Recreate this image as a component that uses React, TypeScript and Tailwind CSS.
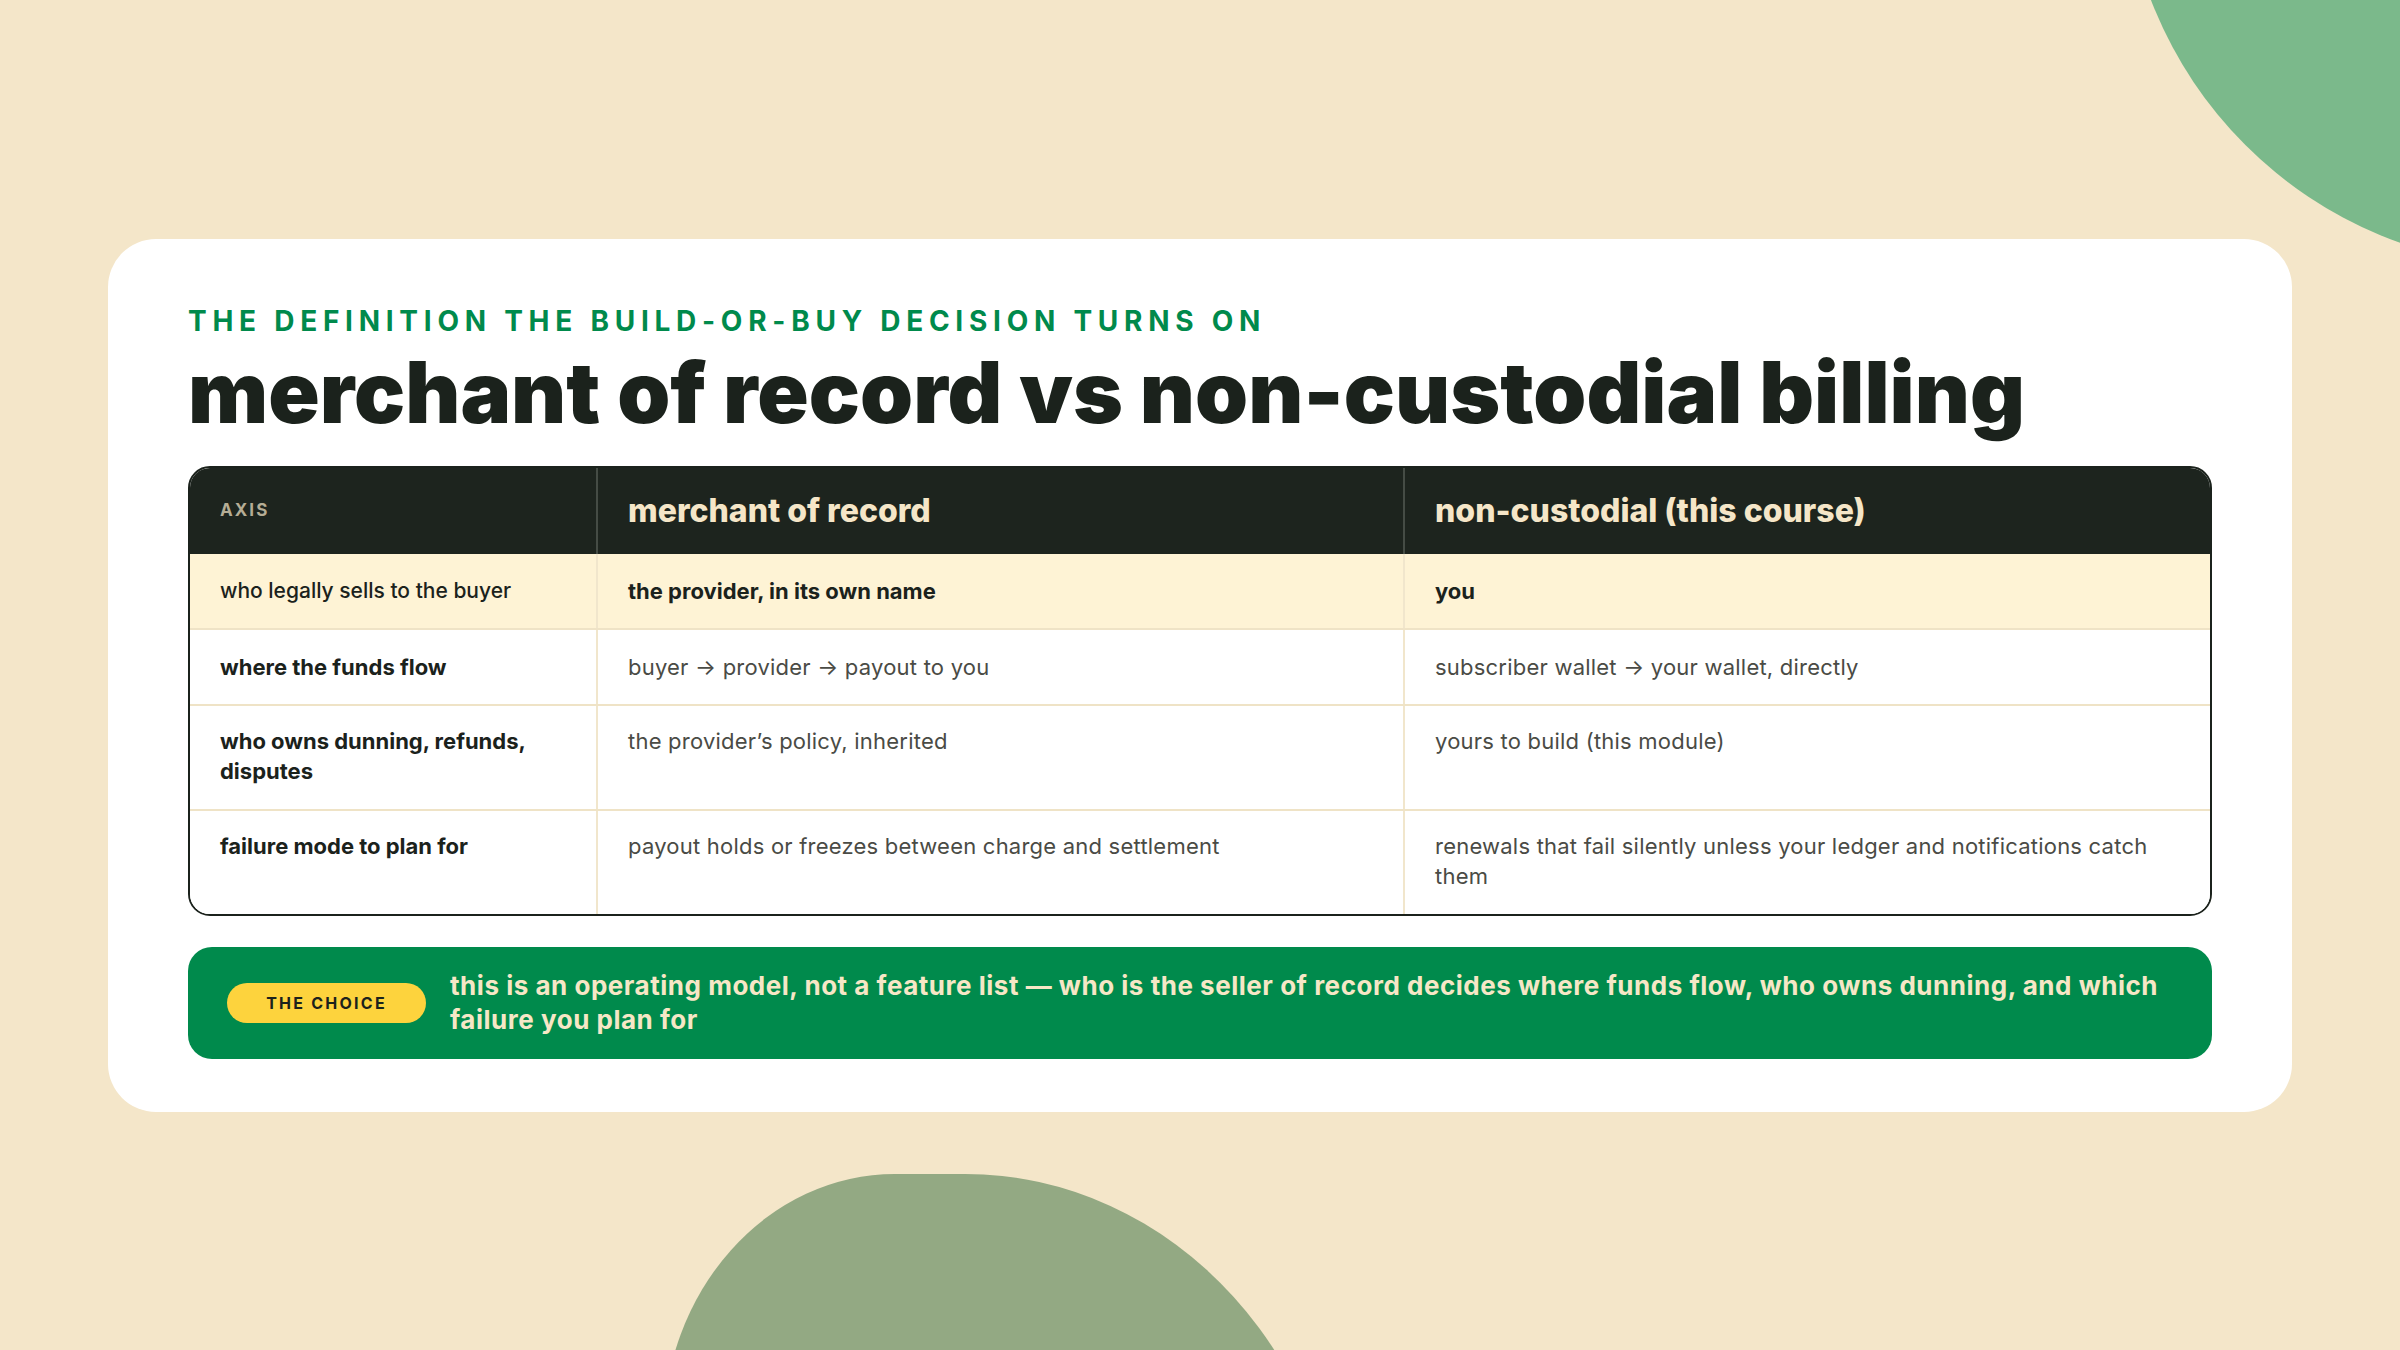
const rows = [
  {
    axis: "who legally sells to the buyer",
    mor: "the provider, in its own name",
    nc: "you",
    highlight: true,
  },
  {
    axis: "where the funds flow",
    mor: "buyer → provider → payout to you",
    nc: "subscriber wallet → your wallet, directly",
  },
  {
    axis: "who owns dunning, refunds, disputes",
    mor: "the provider’s policy, inherited",
    nc: "yours to build (this module)",
  },
  {
    axis: "failure mode to plan for",
    mor: "payout holds or freezes between charge and settlement",
    nc: "renewals that fail silently unless your ledger and notifications catch them",
  },
];

export default function App() {
  return (
    <div className="relative w-[2400px] h-[1350px] overflow-hidden bg-[#F4E6C9] font-['Inter',sans-serif] flex items-center justify-center">
      {/* decorative blobs */}
      <div className="absolute left-[2123px] top-[-567px] w-[834px] h-[834px] rounded-full bg-[#7BB98B]" />
      <div className="absolute left-[663px] top-[1174px] w-[682px] h-[500px] bg-[#93A983] rounded-tl-[232px_260px] rounded-tr-[380px_420px]" />

      <div className="relative w-[2184px] bg-white rounded-[48px] px-[80px] pt-[65px] pb-[53px]">
        <div className="text-[28px] leading-[34px] font-bold tracking-[0.205em] text-[#008A4C]">
          THE DEFINITION THE BUILD-OR-BUY DECISION TURNS ON
        </div>
        <h1 className="mt-[14px] text-[85px] leading-[82px] font-black text-[#1B221C]">
          merchant of record vs non-custodial billing
        </h1>

        {/* comparison table */}
        <div className="mt-[32px] border-2 border-[#1B221C] rounded-[22px] overflow-hidden">
          <div className="grid grid-cols-[406px_1fr_1fr] bg-[#1D241E] h-[86px]">
            <div className="flex items-center px-[30px] text-[17px] font-bold tracking-[0.12em] text-[#B5AD95]">
              AXIS
            </div>
            <div className="flex items-center px-[30px] border-l-2 border-[#454C45] text-[32px] font-extrabold text-[#F5E6C8]">
              merchant of record
            </div>
            <div className="flex items-center px-[30px] border-l-2 border-[#454C45] text-[32px] font-extrabold text-[#F5E6C8]">
              non-custodial (this course)
            </div>
          </div>
          {rows.map((r, i) => (
            <div
              key={i}
              className={`grid grid-cols-[406px_1fr_1fr] text-[22px] leading-[30px] ${i > 0 ? "border-t-2 border-[#EFE3C6]" : ""} ${r.highlight ? "bg-[#FEF3D5]" : "bg-white"}`}
            >
              <div
                className={`px-[30px] text-[#1B221C] ${r.highlight ? "font-medium text-[21px]" : "font-bold"} ${i >= 2 ? "pt-[20px] pb-[23px]" : "py-[22px]"}`}
              >
                {r.axis}
              </div>
              <div
                className={`px-[30px] border-l-2 border-[#F1E6CC] ${i >= 2 ? "pt-[20px] pb-[23px]" : "py-[22px]"} ${r.highlight ? "font-bold text-[#1B221C]" : "tracking-[0.01em] text-[#4A4B45]"}`}
              >
                {r.mor}
              </div>
              <div
                className={`px-[30px] border-l-2 border-[#F1E6CC] ${i >= 2 ? "pt-[20px] pb-[23px]" : "py-[22px]"} ${r.highlight ? "font-bold text-[#1B221C]" : "tracking-[0.01em] text-[#4A4B45]"}`}
              >
                {r.nc}
              </div>
            </div>
          ))}
        </div>

        {/* callout */}
        <div className="mt-[31px] bg-[#008A4C] rounded-[24px] pl-[39px] pr-[40px] py-[22px] flex items-center gap-[24px]">
          <div className="shrink-0 w-[199px] h-[40px] rounded-full bg-[#FDD33D] flex items-center justify-center text-[16px] font-bold tracking-[0.14em] text-[#1B221C]">
            THE CHOICE
          </div>
          <p className="text-[26px] leading-[34px] font-bold tracking-[0.02em] text-[#F6E7C6]">
            this is an operating model, not a feature list — who is the seller of record decides where funds flow, who owns dunning, and which failure you plan for
          </p>
        </div>
      </div>
    </div>
  );
}
